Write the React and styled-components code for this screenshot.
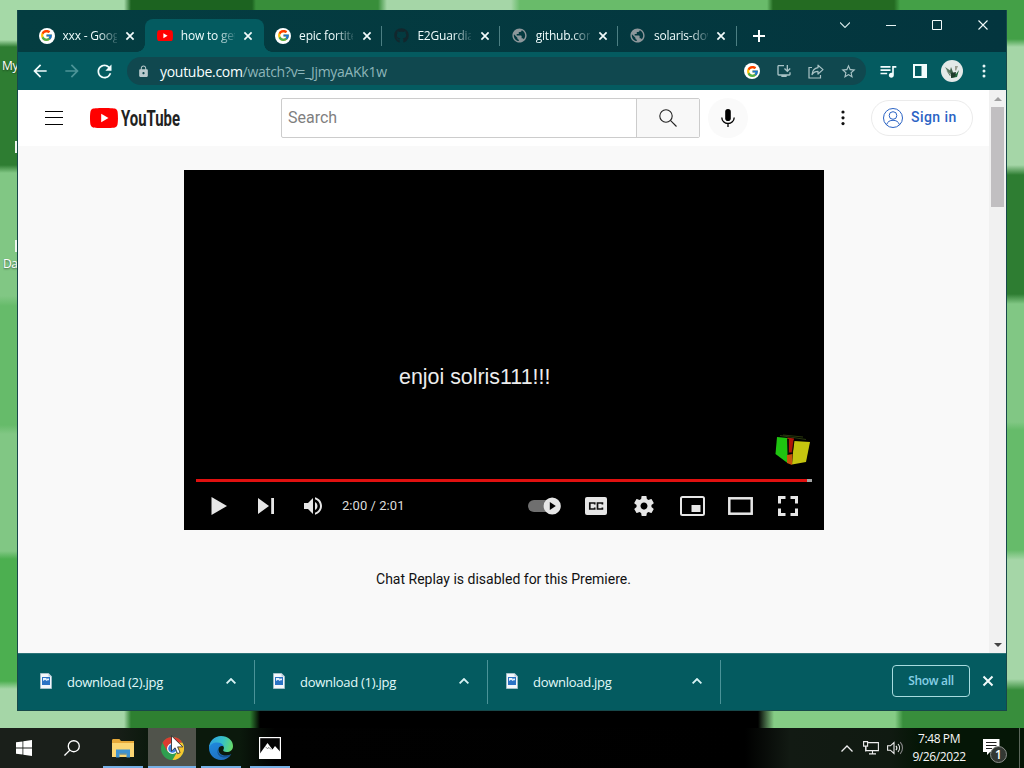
import React, { Fragment } from 'react';
import styled, { createGlobalStyle } from 'styled-components';
import { FcGoogle } from 'react-icons/fc';
import { FaGithub } from 'react-icons/fa';
import {
  MdArrowBack,
  MdArrowForward,
  MdLock,
  MdOutlineInstallDesktop,
  MdPublic,
  MdQueueMusic,
  MdRefresh,
  MdStarBorder,
} from 'react-icons/md';

const THEME = {
  toolbar: '#045b60',
  omnibox: '#10484f',
  shelf_line: '#4b9398',
  text_light: '#effcfc',
  player_icon: '#e6e6e6',
  yt_page: '#f9f9f9',
  font_ui: '"Open Sans", "Noto Sans", sans-serif',
  font_yt: 'Roboto, "Liberation Sans", sans-serif',
};

const GlobalStyle = createGlobalStyle`
  *, *::before, *::after {
    box-sizing: border-box;
  }

  body {
    margin: 0;
    overflow: hidden;
    font-family: ${THEME.font_ui};
  }

  svg {
    display: block;
    flex-shrink: 0;
  }
`

/* Wallpaper: one strip of blurred squares for each edge of the desktop */
const Desktop = styled.div`
  position: relative;
  width: 1024px;
  height: 768px;
  display: flex;
  flex-direction: column;
  background:
    linear-gradient(90deg, #a5d9a7 124px, #1c6320 131px, #1c6320 252px, #388e3a 256px, #388e3a 378px, #a5d6a7 387px, #a5d6a7 511px, #69bb6a 520px, #69bb6a 767px, #246b22 773px, #246b22 894px, #44a047 900px) 0 0 / 1024px 10px no-repeat,
    linear-gradient(180deg, #a5d9a7 40px, #2e7d32 47px, #2e7d32 165px, #81c784 173px, #81c784 296px, #66bb6a 306px, #66bb6a 425px, #81c784 434px, #81c784 551px, #4caf50 559px, #4caf50 681px, #a5d6a7 689px) 0 0 / 17px 728px no-repeat,
    linear-gradient(180deg, #43a047 39px, #a5d6a7 47px, #a5d6a7 165px, #2e7d32 175px, #2e7d32 200px, #2e7d32 200px, #2e7d32 294px, #81c784 304px, #81c784 422px, #66bb6a 430px, #66bb6a 550px, #a5d6a7 560px, #a5d6a7 679px, #388e3c 690px) 1007px 0 / 17px 728px no-repeat,
    linear-gradient(90deg, #a5d6a7 124px, #2e8031 131px, #2e8031 250px, #000 260px, #000 758px, #85cc85 774px, #85cc85 895px, #388e3c 903px) 0 711px / 1024px 17px no-repeat,
    #000;
`

const DesktopLabel = styled.span`
  position: absolute;
  left: ${props => props.$left}px;
  top: ${props => props.$top}px;
  width: ${props => 17 - props.$left}px;
  overflow: hidden;
  white-space: nowrap;
  color: #fff;
  font-size: 12px;
  letter-spacing: -0.4px;
  line-height: 16px;
  text-shadow: 0 1px 2px rgba(0, 0, 0, 0.5);
`

const DesktopMark = styled.span`
  position: absolute;
  left: 15px;
  top: ${props => props.$top}px;
  width: 2px;
  height: 12px;
  background-color: #eef6ee;
`

const Window = styled.div`
  position: relative;
  width: 990px;
  height: 701px;
  margin: 10px 17px 17px;
  display: flex;
  flex-direction: column;
  border: 1px solid #17484a;
  border-top: 0;
`

const TitleBar = styled.div`
  height: 42px;
  display: flex;
  align-items: flex-end;
  padding-left: 9px;
  background: linear-gradient(90deg, #043d41, #03353e);
`

const Tab = styled.div`
  position: relative;
  width: 118.3px;
  height: 33px;
  display: flex;
  align-items: center;
  padding-left: 11.5px;
  border-radius: 8px 8px 0 0;
  background-color: ${props => props.$active ? THEME.toolbar : 'transparent'};

  &::before, &::after {
    content: ${props => props.$active ? '""' : 'none'};
    position: absolute;
    bottom: 0;
    width: 8px;
    height: 8px;
  }

  &::before {
    left: -8px;
    background: radial-gradient(circle at 0 0, transparent 7.5px, ${THEME.toolbar} 8px);
  }

  &::after {
    right: -8px;
    background: radial-gradient(circle at 100% 0, transparent 7.5px, ${THEME.toolbar} 8px);
  }
`

const TabTitle = styled.span`
  width: 54px;
  margin-left: 8px;
  overflow: hidden;
  white-space: nowrap;
  color: ${THEME.text_light};
  font-size: 12px;
  letter-spacing: -0.2px;
  line-height: 18px;
  mask-image: linear-gradient(90deg, #000 36px, transparent 57px);
`

const TabClose = styled.span`
  margin-left: 9.5px;
  color: #f0fbfb;
`

const TabDivider = styled.span`
  width: 1px;
  height: 20px;
  margin-left: auto;
  background-color: #4c7f83;
`

const Favicon = styled.span`
  width: 16px;
  height: 16px;
  flex-shrink: 0;
  display: flex;
  align-items: center;
  justify-content: center;
  border-radius: 50%;
  color: ${props => props.$color || 'inherit'};
  background-color: ${props => props.$plate || 'transparent'};
`

const NewTab = styled.div`
  align-self: flex-end;
  height: 33px;
  padding-left: 16px;
  display: flex;
  align-items: center;
`

const WindowControls = styled.div`
  align-self: flex-start;
  margin-left: auto;
  display: flex;
`

const WindowControl = styled.div`
  width: 46px;
  height: 30px;
  display: flex;
  align-items: center;
  justify-content: center;
`

const Toolbar = styled.div`
  height: 38px;
  display: flex;
  align-items: center;
  padding: 0 6px;
  background-color: ${THEME.toolbar};
`

const ToolButton = styled.div`
  width: 32px;
  display: flex;
  justify-content: center;
  color: ${props => props.$muted ? '#4c9497' : '#f2fdfd'};
`

const Omnibox = styled.div`
  width: 739px;
  height: 28px;
  margin: 0 6px 0 7px;
  padding: 0 2px 0 10px;
  display: flex;
  align-items: center;
  border-radius: 14px;
  background-color: ${THEME.omnibox};
  color: #b9c9cc;
`

const Url = styled.div`
  flex-grow: 1;
  margin-left: 10px;
  color: #8db5b9;
  font-size: 14px;
  letter-spacing: -0.29px;
  white-space: nowrap;

  b {
    color: #f8ffff;
    font-weight: 400;
  }
`

const OmniboxAction = styled.div`
  width: 32px;
  display: flex;
  justify-content: center;
  color: #a9c3c6;
`

const Avatar = styled.div`
  width: 22px;
  height: 22px;
  border-radius: 50%;
  overflow: hidden;
  background-color: #e4e9e8;
`

const Page = styled.div`
  flex-grow: 1;
  display: flex;
  min-height: 0;
  background-color: ${THEME.yt_page};
  font-family: ${THEME.font_yt};
`

const PageBody = styled.div`
  width: 971px;
`

const Masthead = styled.div`
  height: 56px;
  display: flex;
  align-items: center;
  padding: 0 16px 0 27px;
  background-color: #fff;
`

const Logo = styled.div`
  margin-left: 27px;
`

const SearchForm = styled.div`
  width: 419px;
  height: 40px;
  margin-left: 100px;
  display: flex;
  border: 1px solid #ccc;
  border-radius: 2px;
`

const SearchInput = styled.div`
  flex-grow: 1;
  padding-left: 6px;
  line-height: 37px;
  font-size: 16px;
  color: #7f7f7f;
`

const SearchButton = styled.div`
  width: 63px;
  display: flex;
  align-items: center;
  justify-content: center;
  border-left: 1px solid #ccc;
  background-color: #f8f8f8;
`

const VoiceButton = styled.div`
  width: 40px;
  height: 40px;
  margin-left: 8px;
  display: flex;
  align-items: center;
  justify-content: center;
  border-radius: 50%;
  background-color: #fafafa;
`

const MastheadMenu = styled.div`
  margin-left: auto;
  padding-right: 26px;
`

const SignIn = styled.div`
  width: 102px;
  height: 36px;
  padding-left: 11px;
  display: flex;
  align-items: center;
  border: 1px solid #ebebeb;
  border-radius: 18px;
  color: #2a63c4;
  font-size: 14px;
  font-weight: 500;
  letter-spacing: 0.45px;

  span {
    margin: -2px 0 0 8px;
  }
`

const Player = styled.div`
  width: 640px;
  height: 360px;
  margin: 24px 0 0 166px;
  padding: 0 12px;
  display: flex;
  flex-direction: column;
  background-color: #000;
`

const Caption = styled.div`
  margin: 194px 0 0 203px;
  line-height: 26px;
  font-family: "Liberation Sans", sans-serif;
  font-size: 21.4px;
  color: #ececec;
  white-space: nowrap;
`

const Watermark = styled.div`
  margin: 44px 0 0 578px;
`

const Progress = styled.div`
  height: 3px;
  margin-top: 13px;
  background: linear-gradient(90deg, #e0100f 611px, #a5a5a5 611px);
`

const Controls = styled.div`
  height: 48px;
  display: flex;
  align-items: center;
`

const Control = styled.div`
  width: ${props => props.$wide ? 48 : 47}px;
  padding-right: ${props => props.$inset || 0}px;
  display: flex;
  justify-content: center;
`

const Time = styled.div`
  margin: -1px auto 0 5px;
  font-size: 13px;
  letter-spacing: 0.05px;
  color: #ddd;
`

const ChatNotice = styled.p`
  margin: 39px 0 0;
  text-align: center;
  font-size: 14px;
  line-height: 20px;
  color: #111;
`

const Scrollbar = styled.div`
  width: 17px;
  display: flex;
  flex-direction: column;
  align-items: center;
  background-color: #f1f1f1;
`

const ScrollArrow = styled.div`
  height: 17px;
  display: flex;
  align-items: center;
`

const ScrollThumb = styled.div`
  width: 13px;
  height: 100px;
  margin-bottom: auto;
  background-color: #c1bfc1;
`

const Shelf = styled.div`
  height: 57px;
  display: flex;
  align-items: center;
  padding: 0 13px 0 4px;
  border-top: 1px solid #2c7478;
  background-color: ${THEME.toolbar};
`

const Download = styled.div`
  width: 233px;
  height: 44px;
  padding: 0 18px 2px 18px;
  display: flex;
  align-items: center;
  border-right: 1px solid ${THEME.shelf_line};
  color: #e2fafa;
  font-size: 13px;
  letter-spacing: -0.27px;

  span {
    flex-grow: 1;
    margin: 2px 0 0 15px;
  }
`

const ShowAll = styled.div`
  width: 78px;
  height: 32px;
  margin: 0 13px 2px auto;
  border: 1px solid #a7dcdf;
  border-radius: 4px;
  text-align: center;
  line-height: 30px;
  font-size: 12px;
  font-weight: 600;
  letter-spacing: -0.35px;
  color: #86cfe6;
`

const ShelfClose = styled.div`
  margin-bottom: 2px;
`

const Taskbar = styled.div`
  height: 40px;
  display: flex;
  background: linear-gradient(90deg, #1a1f1a 110px, #0b190c 150px, #0b190c 240px, #010101 275px, #000 745px, #121a13 790px, #101a11 890px, #051606 920px);
`

const TaskButton = styled.div`
  width: ${props => props.$width || 49}px;
  display: flex;
  flex-direction: column;
  align-items: center;
  background-color: ${props => props.$focused ? '#50534b' : 'transparent'};
`

const TaskIcon = styled.div`
  height: 38px;
  padding-top: 2px;
  padding-right: ${props => props.$inset || 0}px;
  display: flex;
  align-items: center;
`

const TaskLine = styled.div`
  width: ${props => props.$full ? 48 : 40}px;
  height: 2px;
  background-color: #76b0e6;
`

const Tray = styled.div`
  margin-left: auto;
  display: flex;
  align-items: center;
`

const TrayIcon = styled.div`
  margin-right: ${props => props.$gap}px;
`

const Clock = styled.div`
  width: 62px;
  text-align: center;
  font-size: 12px;
  line-height: 18px;
  letter-spacing: -0.4px;
  color: #f8f8f8;
  white-space: nowrap;
`

const Notifications = styled.div`
  position: relative;
  width: 18px;
  height: 18px;
  margin: 0 18px 0 13px;
`

const Badge = styled.span`
  position: absolute;
  left: 7px;
  top: 7px;
  width: 17px;
  height: 17px;
  border: 1px solid #8b8f8b;
  border-radius: 50%;
  background-color: #333833;
  color: #fff;
  font-size: 12px;
  font-weight: 600;
  line-height: 15px;
  text-align: center;
`

const PeekLine = styled.div`
  width: 1px;
  height: 40px;
  margin-right: 4px;
  background-color: #5b665b;
`

const Pointer = styled.div`
  position: absolute;
  left: 171px;
  top: 735px;
`

const Cross = ({ size = 8, width = 1.7 }) => (
  <svg width={size} height={size} viewBox="0 0 10 10" overflow="visible">
    <path d="M0.5 0.5L9.5 9.5M9.5 0.5L0.5 9.5" stroke="#f2fbfb" strokeWidth={width * 10 / size} />
  </svg>
);

const YouTubeBadge = () => (
  <Fragment>
    <path fill="#f00" d="M27.4 3.1A3.5 3.5 0 0 0 25 .6C22.8 0 14 0 14 0S5.2 0 3 .6A3.5 3.5 0 0 0 .6 3.1C0 5.3 0 10 0 10s0 4.7.6 6.9A3.5 3.5 0 0 0 3 19.4C5.2 20 14 20 14 20s8.8 0 11-.6a3.5 3.5 0 0 0 2.4-2.5C28 14.7 28 10 28 10s0-4.7-.6-6.9z" />
    <path fill="#fff" d="M11.2 14.3L18.5 10l-7.3-4.3z" />
  </Fragment>
);

const YouTubeMark = ({ width }) => (
  <svg width={width} height={width * 0.714} viewBox="0 0 28 20"><YouTubeBadge /></svg>
);

const YouTubeLogo = () => (
  <svg width="91" height="24" viewBox="0 0 91 24">
    <g transform="translate(0 2)"><YouTubeBadge /></g>
    <text
      x="31"
      y="20"
      fontFamily='Roboto, "Liberation Sans", sans-serif'
      fontSize="22"
      fontWeight="700"
      fill="#222"
      textLength="59"
      lengthAdjust="spacingAndGlyphs"
    >YouTube</text>
  </svg>
);

const ShareIcon = () => (
  <svg width="16" height="15" viewBox="0 0 16 15" fill="none" stroke="currentColor" strokeWidth="1.2">
    <path d="M4 3.5H1v10.5h11.5V11" />
    <path d="M10 1.2L15 5.6L10 10V7.4C7.2 7.4 5.4 8.4 4 10.6C4.4 6.8 6.4 4.2 10 3.7z" strokeLinejoin="round" />
  </svg>
);

const SidePanelIcon = () => (
  <svg width="14" height="14" viewBox="0 0 14 14">
    <path fill="#f2fdfd" fillRule="evenodd" d="M0 0h14v14H0zM2 2v10h6.5V2z" />
  </svg>
);

const Dots = ({ color, r = 1.5, gap = 5 }) => (
  <svg width="4" height={gap * 2 + 4} viewBox={`0 0 4 ${gap * 2 + 4}`} fill={color}>
    <circle cx="2" cy="2" r={r} />
    <circle cx="2" cy={2 + gap} r={r} />
    <circle cx="2" cy={2 + gap * 2} r={r} />
  </svg>
);

const AvatarPlant = () => (
  <svg width="22" height="22" viewBox="0 0 22 22">
    <path fill="#5b7560" d="M4 7l6 4 1 4-4-3zM5 10l5 5-1 1z" />
    <path fill="#3d5f48" d="M10 7l3 8-2 2-2-6z" />
    <path fill="#20663a" d="M18 10l-2 7-6 1 3-5 2 1z" />
    <path fill="#9a9c90" d="M14 6l3 0-2 5-1-1z" />
    <path fill="#1e3a2a" d="M10 13l5-1-1 5-4 1z" />
  </svg>
);

const FileIcon = () => (
  <svg width="12" height="16" viewBox="0 0 12 16">
    <path fill="#f4f7fa" stroke="#8fb0c0" strokeWidth="0.6" d="M0.3 0.3h8.2l3.2 3.2v12.2H0.3z" />
    <path fill="#b9cbd8" d="M8.5 0.3l3.2 3.2H8.5z" />
    <path fill="#2b73c4" d="M2 4h8v8H2z" />
    <path fill="#e9f3fc" d="M3 5h3.5v1.5L7.5 5.500H9v2L8 7 6.800 8 5 6.800 3 8z" />
  </svg>
);

const Caret = ({ color = '#d9f3f4' }) => (
  <svg width="10" height="6" viewBox="0 0 10 6" fill="none" stroke={color} strokeWidth="1.8">
    <path d="M0.6 5.4L5 1L9.4 5.4" />
  </svg>
);

const GEAR = 'm 23.94,18.78 c .03,-0.25 .05,-0.51 .05,-0.78 0,-0.27 -0.02,-0.52 -0.05,-0.78 l 1.68,-1.32 c .15,-0.12 .19,-0.33 .09,-0.51 l -1.6,-2.76 c -0.09,-0.17 -0.31,-0.24 -0.48,-0.17 l -1.99,.8 c -0.41,-0.32 -0.86,-0.58 -1.35,-0.78 l -0.30,-2.12 c -0.02,-0.19 -0.19,-0.33 -0.39,-0.33 l -3.2,0 c -0.2,0 -0.36,.14 -0.39,.33 l -0.30,2.12 c -0.48,.2 -0.93,.47 -1.35,.78 l -1.99,-0.8 c -0.18,-0.07 -0.39,0 -0.48,.17 l -1.6,2.76 c -0.10,.17 -0.05,.39 .09,.51 l 1.68,1.32 c -0.03,.25 -0.05,.52 -0.05,.78 0,.26 .02,.52 .05,.78 l -1.68,1.32 c -0.15,.12 -0.19,.33 -0.09,.51 l 1.6,2.76 c .09,.17 .31,.24 .48,.17 l 1.99,-0.8 c .41,.32 .86,.58 1.35,.78 l .30,2.12 c .02,.19 .19,.33 .39,.33 l 3.2,0 c .2,0 .36,-0.14 .39,-0.33 l .30,-2.12 c .48,-0.2 .93,-0.47 1.35,-0.78 l 1.99,.8 c .18,.07 .39,0 .48,-0.17 l 1.6,-2.76 c .09,-0.17 .05,-0.39 -0.09,-0.51 l -1.68,-1.32 0,0 z m -5.94,2.01 c -1.54,0 -2.8,-1.25 -2.8,-2.8 0,-1.54 1.25,-2.8 2.8,-2.8 1.54,0 2.8,1.25 2.8,2.8 0,1.54 -1.25,2.8 -2.8,2.8 l 0,0 z';

const PlayIcon = () => (
  <svg width="16" height="18" viewBox="0 0 16 18"><path fill={THEME.player_icon} d="M0.5 0v18L16 9z" /></svg>
);

const NextIcon = () => (
  <svg width="16" height="16" viewBox="0 0 16 16"><path fill={THEME.player_icon} d="M0 0v16l11-8zM13.2 0H16v16h-2.8z" /></svg>
);

const VolumeIcon = () => (
  <svg width="18" height="18" viewBox="8 9 18 18">
    <path fill={THEME.player_icon} d="M8,21 L12,21 L17,26 L17,10 L12,15 L8,15 Z M19,14 L19,22 C20.48,21.32 21.5,19.77 21.5,18 C21.5,16.26 20.48,14.74 19,14 Z M19,11.29 C21.89,12.15 24,14.83 24,18 C24,21.17 21.89,23.85 19,24.71 L19,26.77 C23.01,25.86 26,22.28 26,18 C26,13.72 23.01,10.14 19,9.23 Z" />
  </svg>
);

const AutoplayIcon = () => (
  <svg width="33" height="18" viewBox="0 0 33 18">
    <rect x="0" y="3" width="27" height="12" rx="6" fill="#6f6f6f" />
    <circle cx="24.2" cy="9" r="8.6" fill={THEME.player_icon} />
    <path fill="#000" d="M21.8 5v8l6-4z" />
  </svg>
);

const CaptionsIcon = () => (
  <svg width="22" height="18" viewBox="0 0 22 18">
    <rect width="22" height="18" rx="2" fill={THEME.player_icon} />
    <path fill="none" stroke="#111" strokeWidth="1.7" d="M9.7 7.5V6H4.8v6h4.9v-1.5M17.4 7.5V6h-4.9v6h4.9v-1.5" />
  </svg>
);

const GearIcon = () => (
  <svg width="20" height="20" viewBox="10 10 16 16"><path fill={THEME.player_icon} d={GEAR} /></svg>
);

const MiniplayerIcon = () => (
  <svg width="25" height="20" viewBox="0 0 25 20">
    <rect x="1" y="1" width="23" height="18" rx="1.5" fill="none" stroke={THEME.player_icon} strokeWidth="2" />
    <rect x="11.5" y="9" width="9" height="7" fill={THEME.player_icon} />
  </svg>
);

const TheaterIcon = () => (
  <svg width="25" height="18" viewBox="0 0 25 18">
    <rect x="1.3" y="1.3" width="22.4" height="15.4" fill="none" stroke={THEME.player_icon} strokeWidth="2.5" />
  </svg>
);

const FullscreenIcon = () => (
  <svg width="20" height="20" viewBox="0 0 20 20" fill="none" stroke={THEME.player_icon} strokeWidth="3">
    <path d="M7.5 1.5h-6v6M12.5 1.5h6v6M7.5 18.5h-6v-6M12.5 18.5h6v-6" />
  </svg>
);

const CubeIcon = () => (
  <svg width="38" height="32" viewBox="0 0 38 32">
    <path fill="#1fc410" d="M3 3L13.5 4v25L1.5 20z" />
    <path fill="#c4c40f" d="M20 7l16 1-4 20-14 2.5z" />
    <path fill="#b01409" d="M13.5 3.5l6.5 1-1.5 14h-4z" />
    <path fill="#1a0a04" d="M13 5l1 14 1 1v-15zM19.5 6l1 1-2 13h-1z" />
    <path fill="#c8540b" d="M13 21l5.5-1-.5 11-5-2z" />
    <path d="M6 1.5l26 4M9 1l20 2" stroke="#34480f" strokeWidth="0.8" />
  </svg>
);

const WindowsIcon = () => (
  <svg width="16" height="16" viewBox="0 0 16 16" fill="#fff">
    <path d="M0 2.3l6.5-.9v6.2H0zM7.3 1.3L16 0v7.6H7.3zM0 8.4h6.5v6.2L0 13.7zM7.3 8.4H16V16l-8.7-1.2z" />
  </svg>
);

const LensIcon = ({ size, color, flip, width = 1.2 }) => (
  <svg width={size} height={size} viewBox="0 0 18 18" fill="none" stroke={color} strokeWidth={width}>
    <g transform={flip ? 'translate(18 0) scale(-1 1)' : undefined}>
      <circle cx="7" cy="7" r="6.2" />
      <path d="M11.4 11.4L17.5 17.5" />
    </g>
  </svg>
);

const FolderIcon = () => (
  <svg width="22" height="19" viewBox="0 0 22 19">
    <path fill="#e6a93a" d="M0 1.5C0 .7.5 0 1.4 0h6l1.6 2H22v16H0z" />
    <path fill="#fbd673" d="M0 4h22v14H0z" />
    <path fill="#3f92cf" d="M4 10.5h14V18.5h-3.5v-4h-7v4H4z" />
    <path fill="#2b6fa5" d="M7.5 14.5h7v1h-7z" />
  </svg>
);

const ChromeIcon = () => (
  <svg width="23" height="23" viewBox="0 0 24 24">
    <circle cx="12" cy="12" r="12" fill="#2f9e4f" />
    <path fill="#dc3b30" d="M1.6 6A12 12 0 0 1 22.4 6H12L6.8 15z" />
    <path fill="#f6c62f" d="M22.4 6A12 12 0 0 1 12 24l5.2-9L12 6z" />
    <circle cx="12" cy="12" r="5.7" fill="#fff" />
    <circle cx="12" cy="12" r="4.5" fill="#3f7fe0" />
  </svg>
);

const EdgeIcon = () => (
  <svg width="24" height="24" viewBox="0 0 24 24">
    <defs>
      <linearGradient id="edge-top" x1="0" y1="0.3" x2="1" y2="0.5">
        <stop offset="0" stopColor="#2f9fe0" />
        <stop offset="0.55" stopColor="#35c1c8" />
        <stop offset="1" stopColor="#66d96a" />
      </linearGradient>
      <linearGradient id="edge-low" x1="0" y1="0" x2="0.6" y2="1">
        <stop offset="0" stopColor="#1f8be0" />
        <stop offset="1" stopColor="#1f6fc0" />
      </linearGradient>
    </defs>
    <path fill="url(#edge-low)" d="M0 12C0 8 4 5.5 8 5.5c4 0 7 2.5 7 5.5-1-1.5-5-1.5-5.5 2C9 17 13 20 17.5 19.5c2 0 4-1 4.8-1.5C20 22 16 24 12 24 5.4 24 0 18.6 0 12z" />
    <path fill="url(#edge-top)" d="M0 12C0 5 5.5 0 12 0c7 0 12 4.5 12 10 0 4-3 6-6.2 6-2.8 0-4.3-1-3.4-2.2C16 11.5 14 6.5 8.5 6.5 4 6.5 1 8.5 0 12z" />
    <path fill="#12406f" d="M9.5 12.5c-1.5 4 2 8 8 7.2 2 0 4-1 4.8-1.7-2 3-5 3.8-8 3.5-5-.5-7.5-5.5-4.8-9z" opacity="0.6" />
  </svg>
);

const PhotosIcon = () => (
  <svg width="22" height="22" viewBox="0 0 22 22">
    <rect x="0.6" y="0.6" width="20.8" height="20.8" fill="#050505" stroke="#fff" strokeWidth="1.2" />
    <path fill="#fff" d="M1 16.5L8.5 6l5 6.5L16 9l5 5.5V21H1z" />
    <path d="M6.5 10l2 1.5 1.5-1 2 2" fill="none" stroke="#050505" strokeWidth="0.5" />
  </svg>
);

const NetworkIcon = () => (
  <svg width="16" height="14" viewBox="0 0 16 14" fill="none" stroke="#eee" strokeWidth="1.1">
    <path d="M5 1.6h10.4v8H3V6M9.5 9.6v3M6 12.9h7M0.6 0.6h4v4.5h-4zM2.6 5v5.5" />
  </svg>
);

const SpeakerIcon = () => (
  <svg width="17" height="14" viewBox="0 0 17 14" fill="none" stroke="#eee" strokeWidth="1.1">
    <path d="M0.6 4.8h2.8L7 1.5v11L3.4 9.2H0.6zM9 4.8a3.5 3.5 0 0 1 0 4.4M11 3a6 6 0 0 1 0 8" />
    <path d="M13.2 1.2a8.5 8.5 0 0 1 0 11.6" stroke="#888" />
  </svg>
);

const FAVICONS = {
  google: <Favicon $plate="#fff"><FcGoogle size={13} /></Favicon>,
  youtube: <Favicon><YouTubeMark width={16} /></Favicon>,
  github: <Favicon $color="#12272d"><FaGithub size={15} /></Favicon>,
  globe: <Favicon $color="#8d979b"><MdPublic size={17} /></Favicon>,
};

const TABS = [
  { title: 'xxx - Google', icon: 'google' },
  { title: 'how to get', icon: 'youtube', active: true },
  { title: 'epic fortite', icon: 'google', divider: true },
  { title: 'E2Guardian', icon: 'github', divider: true },
  { title: 'github.com', icon: 'globe', divider: true },
  { title: 'solaris-dow', icon: 'globe', divider: true },
];

const DOWNLOADS = ['download (2).jpg', 'download (1).jpg', 'download.jpg'];

const BrowserTop = () => (
  <Fragment>
    <TitleBar>
      {TABS.map((tab, index) => (
        <Tab key={index} $active={tab.active}>
          {FAVICONS[tab.icon]}
          <TabTitle>{tab.title}</TabTitle>
          <TabClose><Cross size={8} /></TabClose>
          {tab.divider && <TabDivider />}
        </Tab>
      ))}
      <NewTab>
        <svg width="12" height="12" viewBox="0 0 12 12"><path d="M6 0v12M0 6h12" stroke="#fff" strokeWidth="2" /></svg>
      </NewTab>
      <WindowControls>
        <WindowControl>
          <svg width="10" height="6" viewBox="0 0 10 6" fill="none" stroke="#d8eaeb" strokeWidth="1.1"><path d="M0 0.5L5 5.5L10 0.5" /></svg>
        </WindowControl>
        <WindowControl>
          <svg width="10" height="1" viewBox="0 0 10 1"><path fill="#e8f5f5" d="M0 0h10v1H0z" /></svg>
        </WindowControl>
        <WindowControl>
          <svg width="10" height="10" viewBox="0 0 10 10"><path d="M0.5 0.5h9v9h-9z" fill="none" stroke="#f2fbfb" /></svg>
        </WindowControl>
        <WindowControl><Cross size={10} width={1.1} /></WindowControl>
      </WindowControls>
    </TitleBar>
    <Toolbar>
      <ToolButton><MdArrowBack size={20} /></ToolButton>
      <ToolButton $muted><MdArrowForward size={20} /></ToolButton>
      <ToolButton><MdRefresh size={21} /></ToolButton>
      <Omnibox>
        <MdLock size={13} />
        <Url><b>youtube.com</b>/watch?v=_JjmyaAKk1w</Url>
        <OmniboxAction>{FAVICONS.google}</OmniboxAction>
        <OmniboxAction><MdOutlineInstallDesktop size={16} /></OmniboxAction>
        <OmniboxAction><ShareIcon /></OmniboxAction>
        <OmniboxAction><MdStarBorder size={17} /></OmniboxAction>
      </Omnibox>
      <ToolButton><MdQueueMusic size={20} /></ToolButton>
      <ToolButton><SidePanelIcon /></ToolButton>
      <ToolButton><Avatar><AvatarPlant /></Avatar></ToolButton>
      <ToolButton><Dots color="#e6f6f6" /></ToolButton>
    </Toolbar>
  </Fragment>
);

const WatchPage = () => (
  <Page>
    <PageBody>
      <Masthead>
        <svg width="18" height="14" viewBox="0 0 18 14"><path fill="#030303" d="M0 0h18v1H0zM0 6h18v1H0zM0 13h18v1H0z" /></svg>
        <Logo><YouTubeLogo /></Logo>
        <SearchForm>
          <SearchInput>Search</SearchInput>
          <SearchButton><LensIcon size={18} color="#222" width={1.1} /></SearchButton>
        </SearchForm>
        <VoiceButton>
          <svg width="14" height="18" viewBox="0 0 14 18">
            <rect x="4.2" y="0" width="5.6" height="12" rx="2.8" fill="#000" />
            <path d="M0.8 8.5a6.2 6 0 0 0 12.4 0M7 14.5V18" fill="none" stroke="#000" strokeWidth="1.3" />
          </svg>
        </VoiceButton>
        <MastheadMenu><Dots color="#111" r={1.6} gap={5.8} /></MastheadMenu>
        <SignIn>
          <svg width="20" height="20" viewBox="0 0 20 20" fill="none" stroke="currentColor" strokeWidth="1">
            <circle cx="10" cy="10" r="9.5" />
            <circle cx="10" cy="7.5" r="3.8" />
            <path d="M3.5 16.8C4.5 13.5 7 12.3 10 12.3s5.5 1.2 6.5 4.5" />
          </svg>
          <span>Sign in</span>
        </SignIn>
      </Masthead>
      <Player>
        <Caption>enjoi solris111!!!</Caption>
        <Watermark><CubeIcon /></Watermark>
        <Progress />
        <Controls>
          <Control $inset={1}><PlayIcon /></Control>
          <Control $inset={2}><NextIcon /></Control>
          <Control $inset={2}><VolumeIcon /></Control>
          <Time>2:00 / 2:01</Time>
          <Control $wide $inset={7}><AutoplayIcon /></Control>
          <Control $wide><CaptionsIcon /></Control>
          <Control $wide><GearIcon /></Control>
          <Control $wide><MiniplayerIcon /></Control>
          <Control $wide><TheaterIcon /></Control>
          <Control $wide><FullscreenIcon /></Control>
        </Controls>
      </Player>
      <ChatNotice>Chat Replay is disabled for this Premiere.</ChatNotice>
    </PageBody>
    <Scrollbar>
      <ScrollArrow><svg width="8" height="4" viewBox="0 0 8 4"><path fill="#a0a0a0" d="M0 4l4-4 4 4z" /></svg></ScrollArrow>
      <ScrollThumb />
      <ScrollArrow><svg width="8" height="4" viewBox="0 0 8 4"><path fill="#444" d="M0 0l4 4 4-4z" /></svg></ScrollArrow>
    </Scrollbar>
  </Page>
);

const App = () => (
  <Fragment>
    <GlobalStyle />
    <Desktop>
      <DesktopLabel $left={2} $top={58}>My</DesktopLabel>
      <DesktopMark $top={141} />
      <DesktopMark $top={240} />
      <DesktopLabel $left={3} $top={256}>Da</DesktopLabel>
      <Window>
        <BrowserTop />
        <WatchPage />
        <Shelf>
          {DOWNLOADS.map(name => (
            <Download key={name}>
              <FileIcon />
              <span>{name}</span>
              <Caret />
            </Download>
          ))}
          <ShowAll>Show all</ShowAll>
          <ShelfClose><Cross size={10} width={2} /></ShelfClose>
        </Shelf>
      </Window>
      <Taskbar>
        <TaskButton $width={48}><TaskIcon><WindowsIcon /></TaskIcon></TaskButton>
        <TaskButton $width={50}><TaskIcon $inset={2}><LensIcon size={16} color="#fff" flip width={1.5} /></TaskIcon></TaskButton>
        <TaskButton $width={50}><TaskIcon><FolderIcon /></TaskIcon><TaskLine /></TaskButton>
        <TaskButton $width={48} $focused><TaskIcon><ChromeIcon /></TaskIcon><TaskLine $full /></TaskButton>
        <TaskButton><TaskIcon><EdgeIcon /></TaskIcon><TaskLine /></TaskButton>
        <TaskButton><TaskIcon><PhotosIcon /></TaskIcon><TaskLine /></TaskButton>
        <Tray>
          <TrayIcon $gap={10}>
            <svg width="12" height="7" viewBox="0 0 12 7" fill="none" stroke="#eee" strokeWidth="1.3"><path d="M0.5 6.5L6 1L11.5 6.5" /></svg>
          </TrayIcon>
          <TrayIcon $gap={8}><NetworkIcon /></TrayIcon>
          <TrayIcon $gap={4}><SpeakerIcon /></TrayIcon>
          <Clock>7:48 PM<br />9/26/2022</Clock>
          <Notifications>
            <svg width="17" height="16" viewBox="0 0 17 16">
              <path fill="#fff" d="M0 0h16.5v13H7l-3 3v-3H0z" />
              <path stroke="#222" d="M3 3.5h10.5M3 6.5h10.5M3 9.5h6" />
            </svg>
            <Badge>1</Badge>
          </Notifications>
          <PeekLine />
        </Tray>
      </Taskbar>
      <Pointer>
        <svg width="13" height="20" viewBox="0 0 13 20">
          <path fill="#fff" stroke="#222" strokeWidth="0.8" d="M0.5 0.8v15.4l3.6-3.4 2.5 5.9 2.5-1.1-2.5-5.7h5.2z" />
        </svg>
      </Pointer>
    </Desktop>
  </Fragment>
);

export default App;
